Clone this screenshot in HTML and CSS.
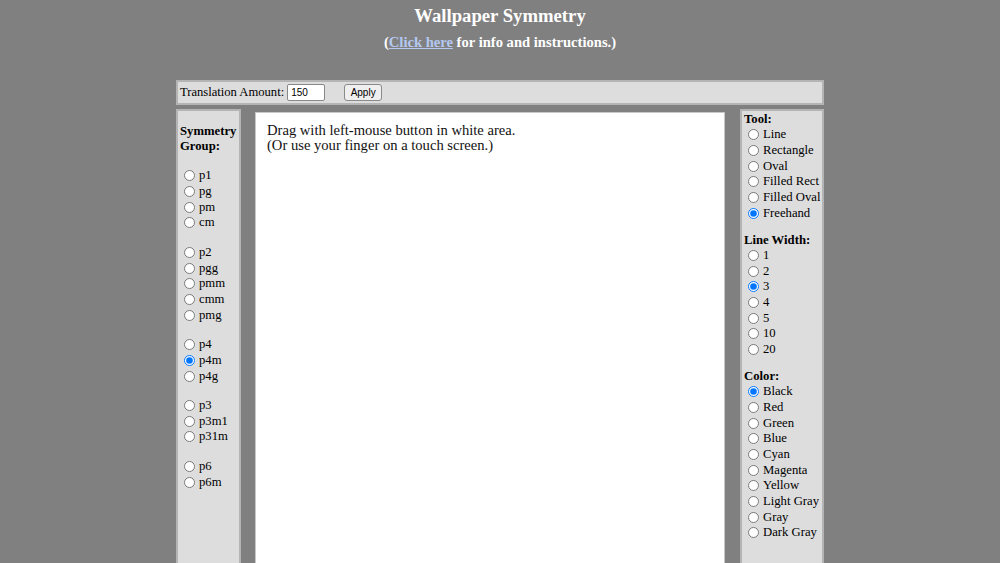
FILE: index.html
```html
<!DOCTYPE html>
<html>
<head>
<meta charset="utf-8">
<title>Wallpaper Symmetry</title>
<link rel="stylesheet" href="styles.css">
</head>
<body>
<h1 class="title">Wallpaper Symmetry</h1>
<p class="subtitle">(<a href="#" class="info-link">Click here</a> for info and instructions.)</p>
<div class="app">
  <div class="topbar">
    <span class="topbar-label">Translation Amount:</span>
    <input class="amount" type="text" value="150">
    <button class="apply">Apply</button>
  </div>
  <div class="main">
    <div class="panel panel-left">
      <div class="heading">Symmetry Group:</div>
      <div class="group group-first">
        <label class="opt"><input type="radio" name="sym"><span>p1</span></label>
        <label class="opt"><input type="radio" name="sym"><span>pg</span></label>
        <label class="opt"><input type="radio" name="sym"><span>pm</span></label>
        <label class="opt"><input type="radio" name="sym"><span>cm</span></label>
      </div>
      <div class="group">
        <label class="opt"><input type="radio" name="sym"><span>p2</span></label>
        <label class="opt"><input type="radio" name="sym"><span>pgg</span></label>
        <label class="opt"><input type="radio" name="sym"><span>pmm</span></label>
        <label class="opt"><input type="radio" name="sym"><span>cmm</span></label>
        <label class="opt"><input type="radio" name="sym"><span>pmg</span></label>
      </div>
      <div class="group">
        <label class="opt"><input type="radio" name="sym"><span>p4</span></label>
        <label class="opt"><input type="radio" name="sym" checked><span>p4m</span></label>
        <label class="opt"><input type="radio" name="sym"><span>p4g</span></label>
      </div>
      <div class="group">
        <label class="opt"><input type="radio" name="sym"><span>p3</span></label>
        <label class="opt"><input type="radio" name="sym"><span>p3m1</span></label>
        <label class="opt"><input type="radio" name="sym"><span>p31m</span></label>
      </div>
      <div class="group">
        <label class="opt"><input type="radio" name="sym"><span>p6</span></label>
        <label class="opt"><input type="radio" name="sym"><span>p6m</span></label>
      </div>
    </div>
    <div class="canvas">
      <p class="hint">Drag with left-mouse button in white area.<br>(Or use your finger on a touch screen.)</p>
    </div>
    <div class="panel panel-right">
      <div class="heading">Tool:</div>
      <div class="group group-first">
        <label class="opt"><input type="radio" name="tool"><span>Line</span></label>
        <label class="opt"><input type="radio" name="tool"><span>Rectangle</span></label>
        <label class="opt"><input type="radio" name="tool"><span>Oval</span></label>
        <label class="opt"><input type="radio" name="tool"><span>Filled Rect</span></label>
        <label class="opt"><input type="radio" name="tool"><span>Filled Oval</span></label>
        <label class="opt"><input type="radio" name="tool" checked><span>Freehand</span></label>
      </div>
      <div class="heading heading-gap">Line Width:</div>
      <div class="group group-first">
        <label class="opt"><input type="radio" name="width"><span>1</span></label>
        <label class="opt"><input type="radio" name="width"><span>2</span></label>
        <label class="opt"><input type="radio" name="width" checked><span>3</span></label>
        <label class="opt"><input type="radio" name="width"><span>4</span></label>
        <label class="opt"><input type="radio" name="width"><span>5</span></label>
        <label class="opt"><input type="radio" name="width"><span>10</span></label>
        <label class="opt"><input type="radio" name="width"><span>20</span></label>
      </div>
      <div class="heading heading-gap">Color:</div>
      <div class="group group-first">
        <label class="opt"><input type="radio" name="color" checked><span>Black</span></label>
        <label class="opt"><input type="radio" name="color"><span>Red</span></label>
        <label class="opt"><input type="radio" name="color"><span>Green</span></label>
        <label class="opt"><input type="radio" name="color"><span>Blue</span></label>
        <label class="opt"><input type="radio" name="color"><span>Cyan</span></label>
        <label class="opt"><input type="radio" name="color"><span>Magenta</span></label>
        <label class="opt"><input type="radio" name="color"><span>Yellow</span></label>
        <label class="opt"><input type="radio" name="color"><span>Light Gray</span></label>
        <label class="opt"><input type="radio" name="color"><span>Gray</span></label>
        <label class="opt"><input type="radio" name="color"><span>Dark Gray</span></label>
      </div>
    </div>
  </div>
</div>
</body>
</html>
```

FILE: styles.css
```css
html, body {
  margin: 0;
  padding: 0;
}
body {
  background: #808080;
  font-family: "Liberation Serif", "Times New Roman", serif;
  color: #000;
}
.title {
  margin: 5px 0 0;
  font-size: 18.7px;
  line-height: 22px;
  font-weight: bold;
  color: #fff;
  text-align: center;
}
.subtitle {
  margin: 6px 0 0;
  font-size: 14.6px;
  line-height: 18px;
  font-weight: bold;
  color: #fff;
  text-align: center;
}
.info-link {
  color: #b4c8f0;
  text-decoration: underline;
}
.app {
  width: 648px;
  margin: 29px auto 0;
}
.topbar {
  box-sizing: border-box;
  height: 25px;
  background: #dddddd;
  border: 2px solid #b4b4b4;
  display: flex;
  align-items: center;
  padding: 0 2px;
  font-size: 12.6px;
}
.topbar-label {
  margin-right: 3px;
}
.amount {
  box-sizing: border-box;
  width: 38px;
  height: 17px;
  padding: 0 3px;
  border: 1px solid #888;
  border-radius: 2px;
  font-family: "Liberation Sans", Arial, sans-serif;
  font-size: 10px;
  background: #fff;
  margin: 0 19px 0 0;
}
.apply {
  box-sizing: border-box;
  width: 38px;
  height: 17px;
  padding: 0;
  border: 1px solid #8a8a8a;
  border-radius: 3px;
  background: #efefef;
  font-family: "Liberation Sans", Arial, sans-serif;
  font-size: 10px;
  color: #000;
}
.main {
  display: flex;
  align-items: flex-start;
  margin-top: 4px;
  height: 460px;
}
.panel {
  box-sizing: border-box;
  background: #dddddd;
  border: 2px solid #b4b4b4;
  border-bottom: none;
  height: 100%;
  font-size: 12.7px;
  flex: none;
}
.panel-left {
  width: 65px;
  padding: 13px 2px 0;
}
.panel-right {
  width: 84px;
  padding: 1px 1px 0 2px;
}
.heading {
  font-weight: bold;
  line-height: 15px;
}
.heading-gap {
  margin-top: 11.5px;
}
.group {
  margin-top: 13.8px;
}
.panel-left .group-first {
  margin-top: 14px;
}
.panel-right .group-first {
  margin-top: 0;
}
.opt {
  display: flex;
  align-items: center;
  height: 15.7px;
  white-space: nowrap;
}
.opt input {
  width: 11px;
  height: 11px;
  margin: 0 4px 0 4px;
  flex: none;
}
.canvas {
  box-sizing: border-box;
  width: 470px;
  flex: none;
  height: 100%;
  margin: 3px 15px 0 14px;
  background: #fff;
  border: 1px solid #c8c8c8;
  border-bottom: none;
  padding: 10px 11px;
}
.hint {
  margin: 0;
  font-size: 14.6px;
  line-height: 15px;
  color: #111;
}
```
